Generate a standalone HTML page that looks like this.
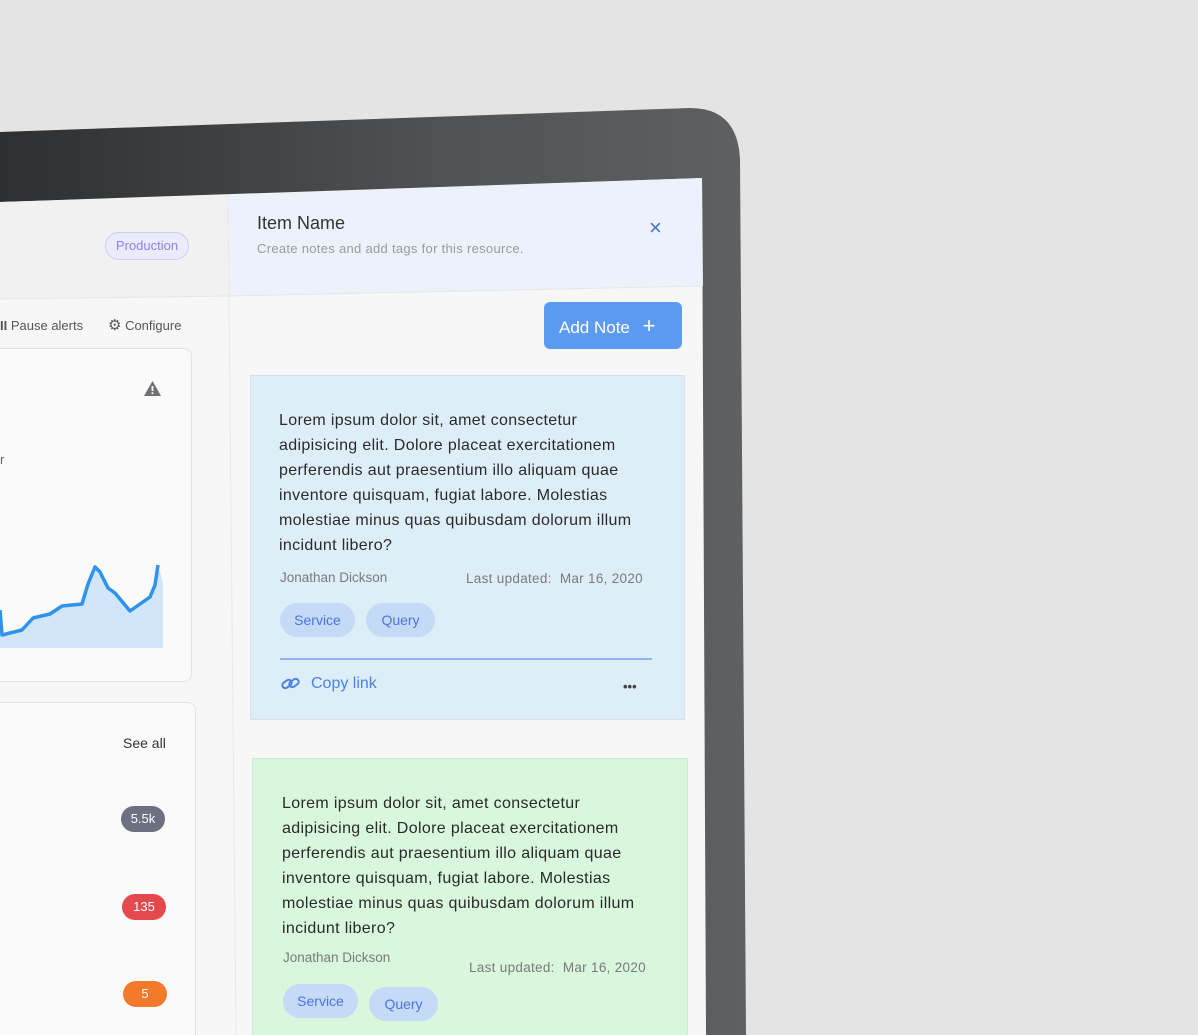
<!DOCTYPE html>
<html style="overflow:hidden;height:1035px"><head><meta charset="utf-8"><style>
*{margin:0;padding:0;box-sizing:border-box}
body{width:1198px;height:1035px;overflow:hidden;background:#e4e4e4;font-family:"Liberation Sans",sans-serif;position:relative}
.a{position:absolute}
.t{white-space:nowrap}
.p{font-size:16px;line-height:25px;color:#2a2a2a;letter-spacing:0.35px}
.tag{position:absolute;height:34px;border-radius:17px;background:#c4daf7;color:#4d74e0;font-size:14px;line-height:34px;text-align:center}
.meta{font-size:13.5px;color:#7a7a7a}
</style></head><body>
<svg class="a" style="left:0;top:0" width="1198" height="1035">
<defs><linearGradient id="g" x1="0" y1="0" x2="1" y2="0"><stop offset="0" stop-color="#2e2f31"/><stop offset="0.6" stop-color="#505254"/><stop offset="1" stop-color="#5e6062"/></linearGradient></defs>
<path d="M0 132 L690 108 Q738 108 740 160 L746 1035 L0 1035 Z" fill="url(#g)"/>
<path d="M0 202 L702 178 L706 1035 L0 1035 Z" fill="#f7f7f7"/>
<path d="M0 202 L228 195 L228 296 L0 299 Z" fill="#f1f1f1"/>
<path d="M228 195 L702 178 L703 286 L228 296 Z" fill="#ebf2fb"/>
<path d="M0 299 L228 296 L703 286" stroke="#e6e6e6" fill="none"/>
<line x1="228" y1="195" x2="236" y2="1035" stroke="#e8e8e8"/>
</svg>
<div class="a t" style="left:105px;top:232px;width:84px;height:28px;border:1px solid #cfcdf6;background:#ecebfb;border-radius:14px;color:#8a84ea;font-size:13px;line-height:26px;text-align:center">Production</div>
<div class="a t" style="left:257px;top:213px;font-size:18px;color:#333">Item Name</div>
<div class="a t" style="left:257px;top:241px;font-size:13px;color:#9a9a9a;letter-spacing:0.3px">Create notes and add tags for this resource.</div>
<div class="a t" style="left:649px;top:215px;font-size:22px;color:#4a6fd6">×</div>
<div class="a t" style="left:0;top:318px;font-size:13px;color:#555"><b style="color:#555">II</b> Pause alerts</div>
<div class="a t" style="left:108px;top:316px;font-size:13px;color:#555"><span style="font-size:15px">⚙</span> Configure</div>
<div class="a" style="left:-10px;top:348px;width:202px;height:334px;background:#fafafa;border:1px solid #e4e4e4;border-radius:8px"></div>
<svg class="a" style="left:143px;top:380px" width="19" height="17"><path d="M9.5 1 L18 16 L1 16 Z" fill="#6f7075"/><rect x="8.6" y="6" width="1.8" height="5" fill="#fff"/><rect x="8.6" y="12.3" width="1.8" height="1.8" fill="#fff"/></svg>
<div class="a t" style="left:0;top:452px;font-size:13px;color:#666">r</div>
<svg class="a" style="left:0;top:550px" width="170" height="100">
<path d="M0 60 L2 85 L22 80 L33 68 L50 64 L62 56 L82 54 L88 34 L95 17 L100 22 L108 38 L115 43 L130 61 L140 54 L150 47 L155 35 L158 15 L163 33 L163 98 L0 98 Z" fill="#d2e6f9"/>
<path d="M0 60 L2 85 L22 80 L33 68 L50 64 L62 56 L82 54 L88 34 L95 17 L100 22 L108 38 L115 43 L130 61 L140 54 L150 47 L155 35 L158 15" stroke="#2f93ee" stroke-width="3.5" fill="none" stroke-linejoin="round"/>
</svg>
<div class="a" style="left:-10px;top:702px;width:206px;height:333px;background:#fafafa;border:1px solid #e4e4e4;border-bottom:none;border-radius:8px 8px 0 0"></div>
<div class="a t" style="left:123px;top:735px;font-size:14px;color:#333">See all</div>
<div class="a t" style="left:121px;top:806px;width:44px;height:26px;border-radius:13px;background:#6c7080;color:#fff;font-size:13px;line-height:26px;text-align:center">5.5k</div>
<div class="a t" style="left:122px;top:894px;width:44px;height:26px;border-radius:13px;background:#e5484d;color:#fff;font-size:13px;line-height:26px;text-align:center">135</div>
<div class="a t" style="left:123px;top:981px;width:44px;height:26px;border-radius:13px;background:#f27a2a;color:#fff;font-size:13px;line-height:26px;text-align:center">5</div>
<div class="a t" style="left:544px;top:302px;width:138px;height:47px;border-radius:6px;background:#5b9bf2;color:#fff;font-size:17px;line-height:47px;padding-left:15px">Add Note <span style="font-size:22px;margin-left:8px">+</span></div>
<div class="a" style="left:250px;top:375px;width:435px;height:345px;background:#deeef9;border:1px solid #d5e3ee"></div>
<div class="a t p" style="left:279px;top:408px">Lorem ipsum dolor sit, amet consectetur<br>adipisicing elit. Dolore placeat exercitationem<br>perferendis aut praesentium illo aliquam quae<br>inventore quisquam, fugiat labore. Molestias<br>molestiae minus quas quibusdam dolorum illum<br>incidunt libero?</div>
<div class="a t meta" style="left:280px;top:570px">Jonathan Dickson</div>
<div class="a t meta" style="left:466px;top:571px;letter-spacing:0.3px">Last updated:&nbsp; Mar 16, 2020</div>
<div class="tag" style="left:280px;top:603px;width:75px">Service</div>
<div class="tag" style="left:366px;top:603px;width:69px">Query</div>
<div class="a" style="left:280px;top:658px;width:372px;height:2px;background:#8ab8f0"></div>
<svg class="a" style="left:281px;top:675px" width="20" height="18"><g fill="none" stroke="#4b82e6" stroke-width="2"><rect x="1" y="6" width="10" height="6" rx="3" transform="rotate(-35 6 9)"/><rect x="8" y="5" width="10" height="6" rx="3" transform="rotate(-35 13 8)"/></g></svg>
<div class="a t" style="left:311px;top:675px;font-size:16px;color:#4b82e6">Copy link</div>
<div class="a t" style="left:623px;top:679px;font-size:13px;color:#444;font-weight:bold">•••</div>
<div class="a" style="left:252px;top:758px;width:436px;height:277px;background:#d9f7dc;border:1px solid #d1ebd4;border-bottom:none"></div>
<div class="a t p" style="left:282px;top:791px">Lorem ipsum dolor sit, amet consectetur<br>adipisicing elit. Dolore placeat exercitationem<br>perferendis aut praesentium illo aliquam quae<br>inventore quisquam, fugiat labore. Molestias<br>molestiae minus quas quibusdam dolorum illum<br>incidunt libero?</div>
<div class="a t meta" style="left:283px;top:950px">Jonathan Dickson</div>
<div class="a t meta" style="left:469px;top:960px;letter-spacing:0.3px">Last updated:&nbsp; Mar 16, 2020</div>
<div class="tag" style="left:283px;top:984px;width:75px">Service</div>
<div class="tag" style="left:369px;top:987px;width:69px">Query</div>
</body></html>
